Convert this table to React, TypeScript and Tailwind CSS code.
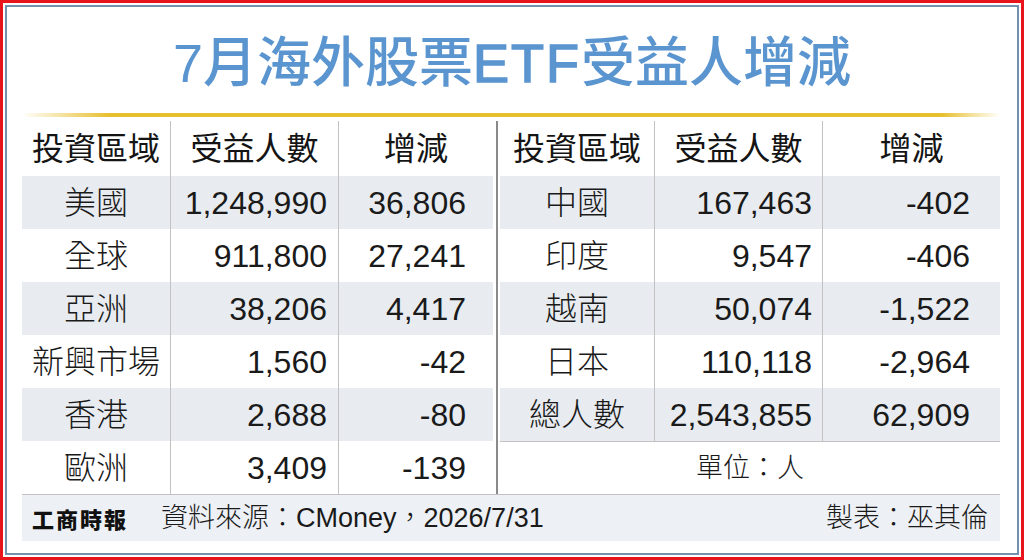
import React from "react";

const F = "font-['Liberation_Sans','Noto_Sans_CJK_TC',sans-serif]";

const left: [string, string, string][] = [
  ["美國", "1,248,990", "36,806"],
  ["全球", "911,800", "27,241"],
  ["亞洲", "38,206", "4,417"],
  ["新興市場", "1,560", "-42"],
  ["香港", "2,688", "-80"],
  ["歐洲", "3,409", "-139"],
];

const right: [string, string, string][] = [
  ["中國", "167,463", "-402"],
  ["印度", "9,547", "-406"],
  ["越南", "50,074", "-1,522"],
  ["日本", "110,118", "-2,964"],
  ["總人數", "2,543,855", "62,909"],
];

function Header({ cols }: { cols: string }) {
  return (
    <div className={`grid ${cols} h-[55px] text-[32px] text-[#141414]`}>
      <div className="flex items-center justify-center">投資區域</div>
      <div className="flex items-center justify-center border-l border-[#c2c2c2]">受益人數</div>
      <div className="flex items-center justify-center border-l border-[#c2c2c2]">增減</div>
    </div>
  );
}

function Row({
  cols,
  r,
  i,
  pr2,
  pr3,
}: {
  cols: string;
  r: [string, string, string];
  i: number;
  pr2: string;
  pr3: string;
}) {
  return (
    <div className={`grid ${cols} h-[53px] text-[#1a1a1a] ${i % 2 === 0 ? "bg-[#e8ecf0]" : "bg-white"}`}>
      <div className="flex items-center justify-center text-[32px] font-light">{r[0]}</div>
      <div className={`flex items-center justify-end border-l border-[#c2c2c2] text-[32px] ${pr2}`}>{r[1]}</div>
      <div className={`flex items-center justify-end border-l border-[#c2c2c2] text-[32px] ${pr3}`}>{r[2]}</div>
    </div>
  );
}

export default function App() {
  return (
    <div className={`w-[1024px] h-[560px] border-[3px] border-[#e8141b] bg-white p-[2px] ${F}`}>
      <div className="h-full border-2 border-[#7590ae] flex flex-col">
        <div className="h-[106px] flex items-center justify-center pt-[6px]">
          <div className="text-[54px] leading-none font-medium text-[#5b95d0]">
            7月海外股票<span className="tracking-[2px] [-webkit-text-stroke:1.5px_#5b95d0]">ETF</span>受益人增減
          </div>
        </div>
        <div className="ml-[15px] w-[978px] h-[4px] bg-[linear-gradient(to_right,#ffffff_0%,#e8bf2e_9%,#e8bf2e_94%,#ffffff_100%)]" />
        <div className="ml-[15px] w-[978px] pt-[4px] flex">
          <div className="w-[471px] flex flex-col">
            <Header cols="grid-cols-[148px_168px_155px]" />
            {left.map((r, i) => (
              <Row key={r[0]} cols="grid-cols-[148px_168px_155px]" r={r} i={i} pr2="pr-[11px]" pr3="pr-[27px]" />
            ))}
          </div>
          <div className="w-[7px] flex justify-center">
            <div className="w-[2px] h-full bg-[#8a8a8a]" />
          </div>
          <div className="w-[500px] flex flex-col">
            <Header cols="grid-cols-[154px_168px_178px]" />
            {right.map((r, i) => (
              <Row key={r[0]} cols="grid-cols-[154px_168px_178px]" r={r} i={i} pr2="pr-[10px]" pr3="pr-[30px]" />
            ))}
            <div className="h-[53px] border-t border-[#c2c2c2] flex items-center justify-center text-[27px] font-light text-[#1a1a1a]">
              單位：人
            </div>
          </div>
        </div>
        <div className="ml-[15px] w-[978px] h-[47px] border-t border-[#c2c2c2] bg-[#edf0f4] flex items-center pl-[10px] pr-[12px] text-[#1a1a1a]">
          <div className="text-[22px] font-black tracking-[2px] text-[#111] font-['Noto_Sans_CJK_TC',sans-serif]">工商時報</div>
          <div className="ml-[33px] text-[27px] font-light">資料來源：CMoney，2026/7/31</div>
          <div className="ml-auto text-[27px] font-light">製表：巫其倫</div>
        </div>
      </div>
    </div>
  );
}
